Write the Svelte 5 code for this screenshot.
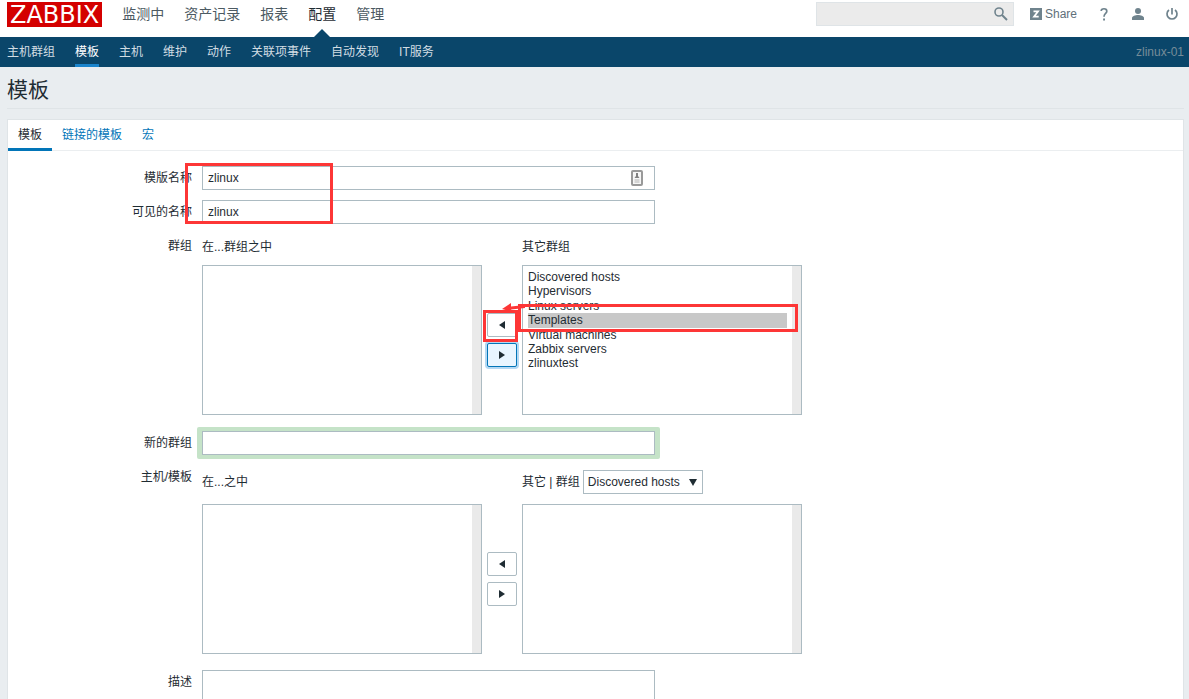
<script>
  const menu = ['监测中', '资产记录', '报表', '配置', '管理'];
  const submenu = ['主机群组', '模板', '主机', '维护', '动作', '关联项事件', '自动发现', 'IT服务'];
  const tabs = ['模板', '链接的模板', '宏'];
  const groups = [
    'Discovered hosts',
    'Hypervisors',
    'Linux servers',
    'Templates',
    'Virtual machines',
    'Zabbix servers',
    'zlinuxtest'
  ];

  let activeMenu = $state('配置');
  let activeSub = $state('模板');
  let activeTab = $state('模板');

  let templateName = $state('zlinux');
  let visibleName = $state('zlinux');
  let newGroup = $state('');
  let description = $state('');
  let hostGroup = $state('Discovered hosts');
  let search = $state('');

  let inGroups = $state([]);
  let otherGroups = $state(groups);
  let selectedIn = $state([]);
  let selectedOther = $state(['Templates']);

  function addGroups() {
    inGroups = [...inGroups, ...selectedOther];
    otherGroups = otherGroups.filter((g) => !selectedOther.includes(g));
    selectedOther = [];
  }

  function removeGroups() {
    otherGroups = [...otherGroups, ...selectedIn].sort();
    inGroups = inGroups.filter((g) => !selectedIn.includes(g));
    selectedIn = [];
  }
</script>

{#snippet arrowLeft()}
  <svg width="6" height="8" viewBox="0 0 6 8"><path d="M6 0v8L0 4z" fill="#1f2c33" /></svg>
{/snippet}

{#snippet arrowRight()}
  <svg width="6" height="8" viewBox="0 0 6 8"><path d="M0 0v8l6-4z" fill="#1f2c33" /></svg>
{/snippet}

<div class="page">
  <header class="top">
    <a class="logo" href="#home">ZABBIX</a>
    <nav class="menu">
      {#each menu as item}
        <a href="#menu" class:active={item === activeMenu} onclick={() => (activeMenu = item)}>{item}</a>
      {/each}
    </nav>
    <div class="tools">
      <form class="search">
        <input type="text" aria-label="Search" bind:value={search} />
        <button type="button" aria-label="Search">
          <svg width="14" height="14" viewBox="0 0 14 14" fill="none" stroke="#6f838d">
            <circle cx="5" cy="5" r="4" stroke-width="1.6" />
            <path d="M8 8l5 5" stroke-width="2" />
          </svg>
        </button>
      </form>
      <a class="share" href="#share">
        <svg width="12" height="12" viewBox="0 0 12 12">
          <rect width="12" height="12" fill="#6f838d" />
          <path d="M3.500 3.300h4.600L4 8.700h4.700" fill="none" stroke="#fff" stroke-width="1.7" />
        </svg>
        Share
      </a>
      <a class="icon" href="#help" aria-label="Help">
        <svg width="14" height="14" viewBox="0 0 14 14" fill="none" stroke="#6f838d">
          <path d="M4.2 4C4.200 1 9.800 1 9.800 4.200 9.800 6.500 7 6.500 7 9.800" stroke-width="1.7" />
          <path d="M6.1 12.500h1.9" stroke-width="2" />
        </svg>
      </a>
      <a class="icon" href="#profile" aria-label="Profile">
        <svg width="14" height="14" viewBox="0 0 14 14" fill="#6f838d">
          <circle cx="7" cy="4" r="3" />
          <path d="M1 13v-2c0-2 3.500-3 6-3s6 1 6 3v2z" />
        </svg>
      </a>
      <a class="icon" href="#logout" aria-label="Sign out">
        <svg width="14" height="14" viewBox="0 0 14 14" fill="none" stroke="#6f838d" stroke-width="1.7">
          <path d="M7 1v6.500" />
          <path d="M4 3a5 5 0 1 0 6 0" />
        </svg>
      </a>
    </div>
  </header>

  <nav class="submenu">
    {#each submenu as item}
      <a href="#submenu" class:active={item === activeSub} onclick={() => (activeSub = item)}>{item}</a>
    {/each}
    <span class="server">zlinux-01</span>
  </nav>

  <main>
    <h1>模板</h1>

    <div class="card">
      <div class="tabs">
        {#each tabs as tab}
          <a href="#tab" class:active={tab === activeTab} onclick={() => (activeTab = tab)}>{tab}</a>
        {/each}
      </div>

      <form class="fields">
        <label for="name">模版名称</label>
        <div class="text">
          <input id="name" type="text" bind:value={templateName} />
          <svg class="autofill" width="12" height="16" viewBox="0 0 12 16">
            <rect x="1" y="1" width="10" height="14" rx="1" fill="#f6f6f6" stroke="#999" stroke-width="2" />
            <path d="M5 3h2v3l1.500 2h-5L5 6z" fill="#808080" />
            <path d="M3.500 10h5M3.500 12h5" stroke="#b4b4b4" />
          </svg>
        </div>

        <label for="visible">可见的名称</label>
        <div class="text">
          <input id="visible" type="text" bind:value={visibleName} />
        </div>

        <label for="groups-in">群组</label>
        <div class="twin">
          <label class="head" for="groups-in">在...群组之中</label>
          <label class="head right" for="groups-other">其它群组</label>
          <select id="groups-in" class="list" multiple bind:value={selectedIn}>
            {#each inGroups as g (g)}
              <option value={g}>{g}</option>
            {/each}
          </select>
          <div class="movers">
            <button type="button" aria-label="Add" onclick={addGroups}>{@render arrowLeft()}</button>
            <button type="button" aria-label="Remove" class="focused" onclick={removeGroups}>
              {@render arrowRight()}
            </button>
          </div>
          <select id="groups-other" class="list" multiple bind:value={selectedOther}>
            {#each otherGroups as g (g)}
              <option value={g}>{g}</option>
            {/each}
          </select>
          <div class="mark mark-button"></div>
          <div class="mark mark-option"></div>
          <svg class="mark-arrow" width="24" height="10" viewBox="0 0 24 10" fill="#fd3636">
            <path d="M0 6L9 0V3.500L23 2V5L9 6.500 11 9z" />
          </svg>
        </div>

        <label for="new-group">新的群组</label>
        <div class="text highlight">
          <input id="new-group" type="text" bind:value={newGroup} />
        </div>

        <label for="hosts-in">主机/模板</label>
        <div class="twin">
          <label class="head" for="hosts-in">在...之中</label>
          <div class="head right">
            <label for="host-group">其它 | 群组</label>
            <span class="dropdown">
              <select id="host-group" bind:value={hostGroup}>
                {#each groups as g}
                  <option value={g}>{g}</option>
                {/each}
              </select>
              <svg width="8" height="7" viewBox="0 0 8 7"><path d="M0 0h8L4 7z" fill="#1f2c33" /></svg>
            </span>
          </div>
          <select id="hosts-in" class="list" multiple></select>
          <div class="movers">
            <button type="button" aria-label="Add">{@render arrowLeft()}</button>
            <button type="button" aria-label="Remove">{@render arrowRight()}</button>
          </div>
          <select class="list" aria-label="其它" multiple></select>
        </div>

        <label for="description">描述</label>
        <div class="text">
          <textarea id="description" rows="7" bind:value={description}></textarea>
        </div>

        <div class="mark mark-names"></div>
      </form>
    </div>
  </main>
</div>

<style>
  :global(body) {
    margin: 0;
    background: #e9edf0;
    color: #1f2c33;
    font-family: 'Liberation Sans', 'Noto Sans CJK SC', sans-serif;
    font-size: 12px;
  }

  * {
    box-sizing: border-box;
  }

  a {
    text-decoration: none;
  }

  svg {
    display: block;
  }

  input,
  select,
  textarea,
  button {
    margin: 0;
    border: 1px solid #acbbc2;
    border-radius: 0;
    background: #fff;
    color: #1f2c33;
    font-family: inherit;
    font-size: 12px;
    outline: none;
  }

  .page {
    display: flex;
    flex-direction: column;
    height: 100vh;
  }

  .top {
    display: flex;
    flex: none;
    align-items: flex-start;
    gap: 20px;
    height: 37px;
    padding: 2px 10px 0 7px;
    background: #fff;
  }

  .logo {
    padding: 2px 3px 0;
    background: #d40000;
    color: #fff;
    font-family: 'DejaVu Sans', sans-serif;
    font-size: 24px;
    line-height: 23px;
  }

  .menu {
    display: flex;
    gap: 20px;
    height: 35px;
    font-size: 14px;
    line-height: 24px;
  }

  .menu a {
    position: relative;
    color: #4c5a62;
  }

  .menu a.active {
    color: #1f2c33;
  }

  .menu a.active::after {
    content: '';
    position: absolute;
    bottom: 0;
    left: 50%;
    margin-left: -8px;
    border: 8px solid transparent;
    border-top: none;
    border-bottom-color: #0a466a;
  }

  .tools {
    display: flex;
    align-items: center;
    gap: 20px;
    height: 24px;
    margin-left: auto;
  }

  .search {
    display: flex;
    width: 198px;
    height: 24px;
    margin-right: -4px;
    border: 1px solid #dfe4e7;
    background: #ebebeb;
  }

  .search input {
    flex: 1;
    min-width: 0;
    padding: 0 5px;
    border: none;
    background: none;
  }

  .search button {
    width: 24px;
    padding: 0 5px;
    border: none;
    background: none;
  }

  .share {
    display: flex;
    align-items: center;
    gap: 3px;
    color: #5f707a;
  }

  .submenu {
    display: flex;
    flex: none;
    gap: 20px;
    height: 30px;
    padding: 0 5px 0 7px;
    background: #0a466a;
    line-height: 30px;
  }

  .submenu a {
    color: #d2dde3;
  }

  .submenu a.active {
    border-bottom: 3px solid #1a84cc;
    color: #fff;
  }

  .server {
    margin-left: auto;
    color: #768d99;
  }

  main {
    flex: 1;
    min-height: 0;
    padding: 0 5px 10px 7px;
    overflow-y: auto;
    scrollbar-width: none;
  }

  h1 {
    margin: 0 0 10px;
    padding-top: 5px;
    border-bottom: 1px solid #dfe4e7;
    font-size: 21px;
    font-weight: normal;
    line-height: 36px;
  }

  .card {
    border: 1px solid #dfe4e7;
    background: #fff;
  }

  .tabs {
    display: flex;
    height: 31px;
    border-bottom: 1px solid #ebeef0;
    line-height: 30px;
  }

  .tabs a {
    height: 31px;
    padding: 0 10px;
    color: #0275b8;
  }

  .tabs a.active {
    border-bottom: 3px solid #0275b8;
    color: #1f2c33;
  }

  .fields {
    position: relative;
    display: grid;
    grid-template-columns: 184px 1fr;
    gap: 10px;
    padding: 15px 0;
    line-height: 24px;
  }

  .fields > label {
    text-align: right;
  }

  .text {
    position: relative;
    width: 453px;
    height: 24px;
  }

  .text input {
    display: block;
    width: 100%;
    height: 24px;
    padding: 0 5px;
  }

  .text textarea {
    display: block;
    width: 100%;
    padding: 4px 5px;
    resize: none;
  }

  .autofill {
    position: absolute;
    top: 4px;
    right: 12px;
  }

  .highlight::before {
    content: '';
    position: absolute;
    inset: -4px -5px;
    border-radius: 2px;
    background: #c5e3c8;
  }

  .highlight input {
    position: relative;
  }

  .twin {
    position: relative;
    display: grid;
    grid-template-columns: 280px 30px 280px;
    column-gap: 5px;
    row-gap: 10px;
    padding: 5px 0 6px;
  }

  .head {
    display: flex;
    align-items: center;
    line-height: 16px;
  }

  .head.right {
    grid-column: 3;
    gap: 3px;
  }

  .list {
    width: 100%;
    height: 150px;
    padding: 4px 14px 4px 5px;
    background: linear-gradient(to left, #eaeaea 9px, #fff 9px);
    overflow-y: auto;
    scrollbar-width: none;
  }

  .list option {
    padding: 0;
  }

  .list option:checked {
    background: #c8c8c8 linear-gradient(#c8c8c8, #c8c8c8);
    color: #1f2c33;
  }

  .movers {
    display: flex;
    flex-direction: column;
    justify-content: center;
    gap: 6px;
  }

  .movers button {
    display: flex;
    align-items: center;
    justify-content: center;
    height: 24px;
    padding: 0;
    border-radius: 2px;
  }

  .movers button.focused {
    border-color: #0275b8;
    background: #e8f5ff;
    box-shadow: 0 0 0 2px #b3d8f3;
  }

  .dropdown {
    position: relative;
  }

  .dropdown select {
    display: block;
    width: 120px;
    height: 24px;
    padding: 0 4px;
    appearance: none;
  }

  .dropdown svg {
    position: absolute;
    top: 9px;
    right: 6px;
    pointer-events: none;
  }

  .mark {
    position: absolute;
    border: 3px solid #fd3636;
    pointer-events: none;
  }

  .mark-names {
    top: 12px;
    left: 177px;
    width: 148px;
    height: 61px;
  }

  .mark-button {
    top: 76px;
    left: 281px;
    width: 35px;
    height: 32px;
  }

  .mark-option {
    top: 70px;
    left: 316px;
    width: 280px;
    height: 28px;
  }

  .mark-arrow {
    position: absolute;
    top: 69px;
    left: 300px;
    pointer-events: none;
  }
</style>
